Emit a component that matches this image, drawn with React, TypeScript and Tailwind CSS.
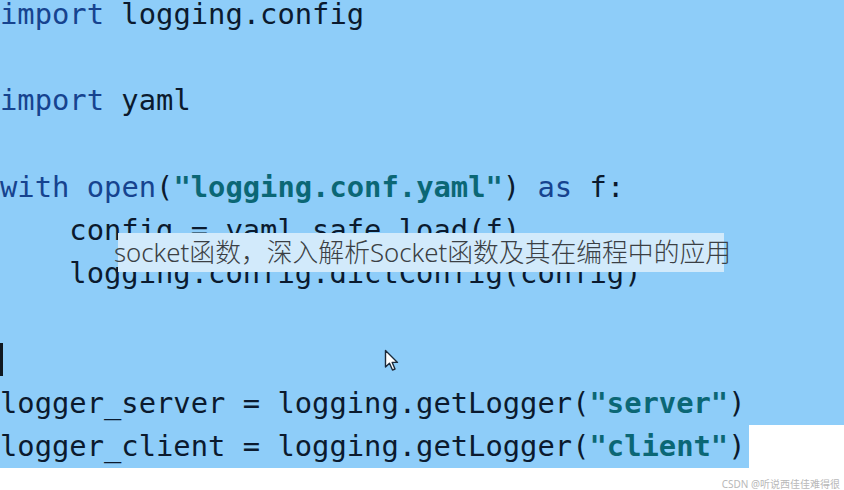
import React from 'react';

type Tok = { t: string; c?: 'kw' | 'str' | 'fn' };

const lines: Tok[][] = [
  [{ t: 'import', c: 'kw' }, { t: ' logging.config' }],
  [],
  [{ t: 'import', c: 'kw' }, { t: ' yaml' }],
  [],
  [{ t: 'with', c: 'kw' }, { t: ' ' }, { t: 'open', c: 'fn' }, { t: '(' }, { t: '"logging.conf.yaml"', c: 'str' }, { t: ') ' }, { t: 'as', c: 'kw' }, { t: ' f:' }],
  [{ t: '    config = yaml.safe_load(f)' }],
  [{ t: '    logging.config.dictConfig(config)' }],
  [],
  [],
  [{ t: 'logger_server = logging.getLogger(' }, { t: '"server"', c: 'str' }, { t: ')' }],
];

const last: Tok[] = [{ t: 'logger_client = logging.getLogger(' }, { t: '"client"', c: 'str' }, { t: ')' }];

const color = (c?: string) => {
  if (c === 'kw' || c === 'fn') return 'text-[#16438f]';
  if (c === 'str') return 'text-[#0b6775] font-bold';
  return 'text-[#0b1a2e]';
};

const Line = ({ toks }: { toks: Tok[] }) => (
  <div className="h-[43.2px] leading-[43.2px] whitespace-pre">
    {toks.map((k, i) => (
      <span key={i} className={color(k.c)}>{k.t}</span>
    ))}
  </div>
);

const App: React.FC = () => {
  return (
    <div className="relative w-[844px] h-[490px] overflow-hidden bg-white font-['DejaVu_Sans_Mono',monospace] text-[28.8px]">
      <div className="-mt-[7px]">
        <div className="bg-[#8ecdf9]">
          {lines.map((l, i) => (
            <Line key={i} toks={l} />
          ))}
        </div>
        <div className="w-[749px] bg-[#8ecdf9]">
          <Line toks={last} />
        </div>
      </div>

      {/* text cursor */}
      <div className="absolute left-0 top-[343px] w-[3px] h-[33px] bg-[#101820]" />

      {/* mouse pointer */}
      <svg className="absolute left-[384px] top-[349px]" width="16" height="24" viewBox="0 0 16 24">
        <path d="M1.5 1.5 L1.5 18 L5.5 14.2 L8.5 21 L11 20 L8.2 13.4 L13.5 13.4 Z" fill="#fff" stroke="#1c2a3a" strokeWidth="1.4" strokeLinejoin="round" />
      </svg>

      {/* caption overlay */}
      <div className="absolute left-[118px] top-[233px] w-[606px] h-[39px] bg-[#d2eafb]" />
      <div className="absolute left-[114px] top-[233px] h-[39px] leading-[39px] whitespace-nowrap text-[25.8px] font-light text-[#3b3f44] font-['Noto_Sans','Noto_Sans_CJK_SC',sans-serif]">
        socket函数，深入解析Socket函数及其在编程中的应用
      </div>

      {/* watermark */}
      <div className="absolute right-[4px] top-[477px] whitespace-nowrap text-[10px] leading-[14px] text-[#b8b8b8] font-['Noto_Sans','Noto_Sans_CJK_SC',sans-serif]">
        CSDN @听说西佳佳难得很
      </div>
    </div>
  );
};

export default App;
